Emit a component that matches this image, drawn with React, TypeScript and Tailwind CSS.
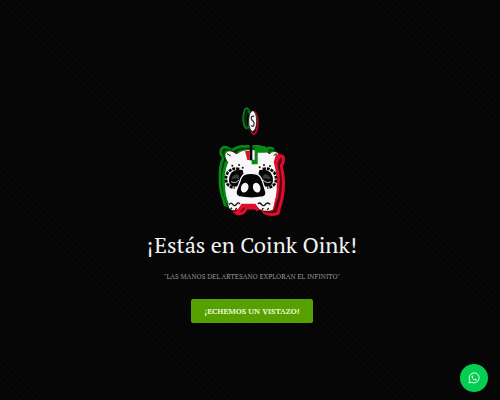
const BODY =
  'M66 174 Q74 164 88 172 L98 178 Q110 168 128 166 L182 166 L196 178 Q208 166 221 174 Q226 186 216 202 Q228 250 218 300 L212 322 L206 344 Q184 352 166 342 L154 328 L112 328 L102 342 Q86 350 76 340 L70 318 Q60 290 62 262 Q60 226 72 200 Q60 188 66 174 Z';

function PetalEye({ x, flip }: { x: number; flip?: boolean }) {
  return (
    <g transform={`translate(${x} 247) scale(${flip ? -1 : 1} 1)`}>
      <path
        d="M14 -25 Q-8 -30 -21 -14 Q-31 4 -22 20 Q-14 30 0 31"
        fill="none"
        stroke="#050505"
        strokeWidth="8"
        strokeDasharray="9 3"
      />
      <path d="M24 -22 Q2 -26 -10 -14 Q-21 2 -15 19 Q-4 32 10 26 Q22 12 27 -8 Z" fill="#050505" />
      <path d="M-10 6 Q-6 -9 9 -9 Q16 -4 12 4 Q4 2 -10 6 Z" fill="#3a3a3a" />
      <path d="M-11 13 Q2 20 13 8" fill="none" stroke="#c4c4c4" strokeWidth="3" />
    </g>
  );
}

function PiggyBank() {
  return (
    <svg className="ml-1 h-[130px] w-[100px]" viewBox="0 0 300 390" role="img" aria-label="Coink Oink">
      <g fill="none">
        <ellipse cx="128" cy="70" rx="10" ry="30" stroke="#087a1c" strokeWidth="6" />
        <ellipse cx="136" cy="74" rx="10" ry="30" stroke="#064f12" strokeWidth="3" />
        <ellipse cx="150" cy="84" rx="11" ry="33" stroke="#b40724" strokeWidth="6" />
      </g>
      <ellipse cx="146" cy="78" rx="12" ry="31" fill="#f5f5f5" stroke="#050505" strokeWidth="2" />
      <path d="M150 64 Q141 62 142 71 Q143 77 148 79 Q153 85 149 92 Q146 96 142 91" fill="none" stroke="#333" strokeWidth="4" />

      <g strokeLinejoin="round">
        <path d={BODY} transform="translate(-14 -12)" fill="#042d09" stroke="#078817" strokeWidth="8" />
        <path d={BODY} transform="translate(16 11)" fill="#4f0712" stroke="#e30c2c" strokeWidth="9" />
        <path d={BODY} transform="translate(-5 -5)" fill="#078817" stroke="#053f0c" strokeWidth="4" />
        <path d={BODY} transform="translate(6 3)" fill="#e30c2c" stroke="#5c0815" strokeWidth="5" />
      </g>
      <path d={BODY} fill="#f8f8f8" />
      <path d="M62 200 L73 201 Q59 232 63 267 Q63 302 75 328 L66 323 Q49 278 55 232 Z" fill="#078817" />
      <path d="M152 153 H182 L198 168 L185 173 H161 V208 H143 V194 H152 Z" fill="#078817" />
      <path d="M123 168 H137 V195 H130 Z" fill="#e30c2c" />
      <path d="M137 145 H145 V196 H137 Z" fill="#050505" />
      <path d="M216 178 L233 180 L220 206 L228 255 L222 308 L213 330 L211 325 Q222 286 217 239 Q214 219 209 202 Z" fill="#e30c2c" />
      <path d="M113 326 H154 L166 344 L158 349 L148 338 H118 L106 354 H88 L103 344 Z" fill="#e30c2c" />

      <PetalEye x={92} />
      <PetalEye x={190} flip />
      <path
        d="M121 238 Q140 232 160 238 Q170 242 176 260 L184 286 Q190 302 176 306 Q140 313 104 305 Q92 299 98 284 L108 258 Q112 243 121 238 Z"
        fill="#050505"
        stroke="#f8f8f8"
        strokeWidth="4"
      />
      <ellipse cx="122" cy="278" rx="11" ry="15" fill="#f8f8f8" transform="rotate(18 122 278)" />
      <ellipse cx="158" cy="278" rx="11" ry="15" fill="#f8f8f8" transform="rotate(-18 158 278)" />
      <g fill="#111">
        <circle cx="85" cy="212" r="3" />
        <circle cx="105" cy="210" r="3" />
        <circle cx="116" cy="218" r="3" />
        <circle cx="167" cy="217" r="3" />
        <circle cx="180" cy="210" r="3" />
        <circle cx="198" cy="213" r="3" />
      </g>
      <g fill="none" stroke="#111" strokeWidth="4">
        <path d="M76 329 Q80 320 87 329 Q93 336 99 326 Q103 321 108 327" />
        <path d="M162 327 Q167 320 173 329 Q180 336 186 326 Q192 321 199 329" />
        <path d="M80 342 L84 338 M94 345 L98 339 M174 345 L178 339 M190 345 L194 339" />
        <path d="M69 176 L80 183 M209 181 L218 176" strokeWidth="3" />
      </g>
    </svg>
  );
}

function WhatsAppIcon() {
  return (
    <svg className="size-3" viewBox="0 0 24 24" fill="none" aria-hidden="true">
      <path d="M2 22 L3.5 16.6 A10 10 0 1 1 7.3 20.5 Z" stroke="#dfffe9" strokeWidth="2" strokeLinejoin="round" />
      <path
        d="M8.4 6.8 C7.2 7.2 6.7 8.8 7.3 10.4 C8.5 13.4 11 16 14.4 17 C16 17.4 17.4 16.5 17.7 14.8 L14.9 13.4 L13.6 14.8 C11.6 14 10.2 12.5 9.4 10.8 L10.4 9.5 L9.3 6.8 Z"
        fill="#dfffe9"
      />
    </svg>
  );
}

export default function App() {
  return (
    <main className="flex min-h-screen flex-col items-center bg-[#070707] bg-[repeating-linear-gradient(45deg,#030303_0px,#030303_1px,transparent_1px,transparent_4px)] pt-[95px] pl-1 text-center font-['PT_Serif','Liberation_Serif',serif]">
      <PiggyBank />
      <h1 className="mt-1 px-4 text-[22px] leading-8 text-[#f2f2f2]">¡Estás en Coink Oink!</h1>
      <p className="mt-2 px-4 text-[7px] leading-4 text-[#8f8f8f]">"LAS MANOS DEL ARTESANO EXPLORAN EL INFINITO"</p>
      <button
        type="button"
        className="mt-3.5 h-6 rounded-xs bg-[#56a000] px-[13px] text-[8px] leading-6 font-bold text-[#e9f6d8]"
      >
        ¡ECHEMOS UN VISTAZO!
      </button>
      <a
        href="#whatsapp"
        aria-label="WhatsApp"
        className="fixed right-3 bottom-2 flex size-7 items-center justify-center rounded-full bg-[#05cd51]"
      >
        <WhatsAppIcon />
      </a>
    </main>
  );
}
